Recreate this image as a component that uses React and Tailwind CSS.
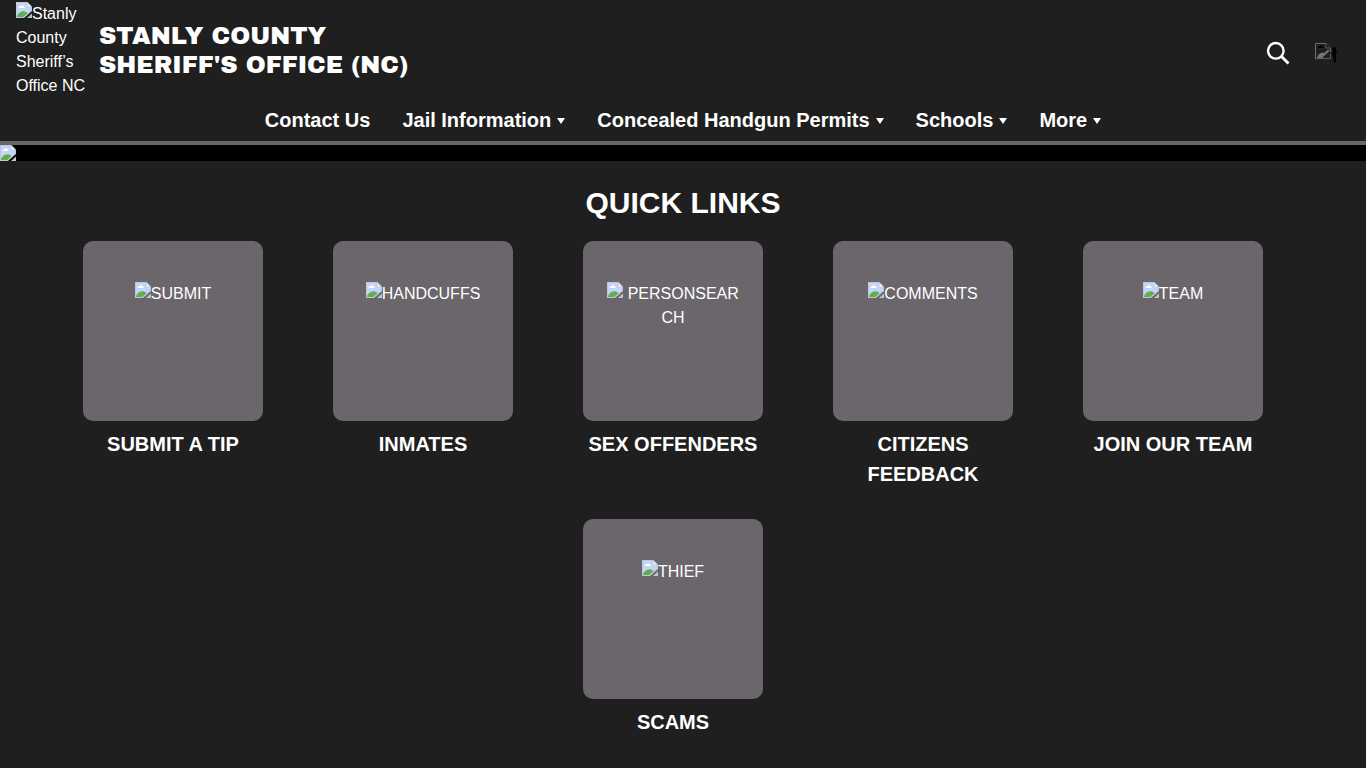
function BrokenImage({ className = "" }) {
  return (
    <svg viewBox="0 0 16 16" className={"h-4 w-4 shrink-0 " + className} aria-hidden="true">
      <path d="M0 0H11.5L16 4.5V9L8 16H0Z" fill="#c3c7cf" />
      <path d="M1 1H11V5H15V8.5L7.2 15H1Z" fill="#c3d5fb" />
      <path d="M2.5 6C2.5 4.8 3.5 4 4.5 4.2C5.2 2.9 7.2 3.2 7.5 4.5C8.5 4.5 9 5.4 8.6 6Z" fill="#fff" />
      <path d="M1 15V13.5C3 10.5 5.5 9 8 9.2C9.5 9.4 10.8 10.2 11.5 11.2L7.2 15Z" fill="#5fae50" />
      <path d="M11.2 0.8L15.3 4.9H11.2Z" fill="#fff" stroke="#c3c7cf" strokeWidth="0.8" />
      <path d="M16 11.5V16H11Z" fill="#c3c7cf" />
      <path d="M15 13.5V15H13.2Z" fill="#9fcf9a" />
    </svg>
  );
}

function DarkBrokenImage() {
  return (
    <svg viewBox="0 0 24 20" className="h-5 w-6" aria-hidden="true">
      <path d="M1.5 16V0.5H12L16.5 5V9" fill="none" stroke="#6d6d6d" />
      <path d="M3 15C3.5 11 7 9 10.5 9.8L13.5 7L16 7.5L8 15Z" fill="#757575" />
      <path d="M4 4.5C5 2.5 7 2.5 9 3.5V5H4Z" fill="#000" />
      <path d="M12 0.5V5H16.5" fill="#111" stroke="#666" />
      <path d="M2 15.5H16.5V11" fill="none" stroke="#5f5f5f" />
      <path d="M18.5 4.5H22V8L23 9L22 11V19.5H19.5V15L18.5 13Z" fill="#000" />
    </svg>
  );
}

const menu = ["Jail Information", "Concealed Handgun Permits", "Schools", "More"];

const links = [
  { alt: "SUBMIT", label: "SUBMIT A TIP" },
  { alt: "HANDCUFFS", label: "INMATES" },
  { alt: " PERSONSEARCH", label: "SEX OFFENDERS" },
  { alt: "COMMENTS", label: "CITIZENS FEEDBACK" },
  { alt: "TEAM", label: "JOIN OUR TEAM" },
  { alt: "THIEF", label: "SCAMS" },
];

export default function App() {
  return (
    <div className="min-h-screen bg-[#1f1f1f] font-['Liberation_Sans',Arial,sans-serif] text-base text-white">
      <header className="border-b-4 border-[#6b666b]">
        <div className="flex items-center justify-between px-4 pt-0.5">
          <a href="#home" className="flex items-center gap-3">
            <span className="w-[71px]">
              <BrokenImage className="inline-block align-[1px]" />
              Stanly County Sheriff’s Office NC
            </span>
            <span className="pt-0.5 font-['Archivo_Black','Inter',sans-serif] text-2xl leading-[29px] font-normal">
              STANLY COUNTY
              <br />
              SHERIFF'S OFFICE (NC)
            </span>
          </a>
          <div className="flex items-center gap-6 pt-1.5 pr-3">
            <button type="button" aria-label="Search">
              <svg viewBox="0 0 24 24" className="h-6 w-6" fill="none" stroke="#fff" aria-hidden="true">
                <circle cx="9.8" cy="9.8" r="7.8" strokeWidth="2.4" />
                <path d="M15.5 15.5L22.5 22.5" strokeWidth="2.8" />
              </svg>
            </button>
            <button type="button" aria-label="Translate">
              <DarkBrokenImage />
            </button>
          </div>
        </div>
        <nav className="flex justify-center gap-8 pt-[7px] pb-[6px] text-xl leading-[30px] font-bold">
          <a href="#contact">Contact Us</a>
          {menu.map((label) => (
            <button key={label} type="button" className="flex items-center gap-[6px] font-bold">
              {label}
              <svg viewBox="0 0 8 6" className="mt-0.5 h-[6px] w-2" aria-hidden="true">
                <path d="M0 0H8L4 6Z" fill="#fff" />
              </svg>
            </button>
          ))}
        </nav>
      </header>
      <div className="bg-black">
        <BrokenImage className="block" />
      </div>
      <main className="pt-5 pb-8">
        <h1 className="text-center text-3xl leading-[44px] font-bold">QUICK LINKS</h1>
        <div className="mx-auto flex max-w-[1270px] flex-wrap justify-center gap-x-[70px] gap-y-[30px] pt-4 pr-5">
          {links.map((l) => (
            <a key={l.label} href="#link" className="flex w-[180px] flex-col gap-2 text-center">
              <span className="h-[180px] rounded-[10px] bg-[#6b666b] px-5 pt-[41px] break-all">
                <BrokenImage className="inline-block align-[1px]" />
                {l.alt}
              </span>
              <span className="text-xl leading-[30px] font-bold">{l.label}</span>
            </a>
          ))}
        </div>
      </main>
    </div>
  );
}
